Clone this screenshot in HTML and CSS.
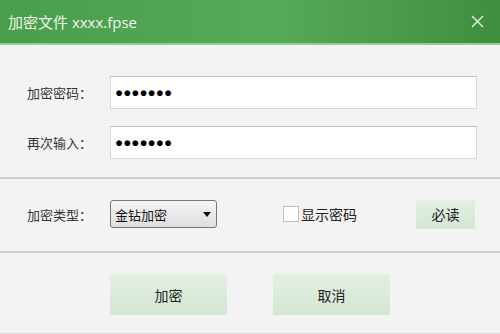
FILE: index.html
```html
<!DOCTYPE html>
<html lang="zh">
<head>
  <meta charset="UTF-8" />
  <title>加密文件</title>
  <link rel="stylesheet" href="styles.css">
</head>
<body>
  <div class="dialog">
    <div class="title_bar">
      <span class="title">加密文件 xxxx.fpse</span>
      <svg class="close" width="13" height="13" viewBox="0 0 13 13">
        <path d="M1 1 L12 12 M12 1 L1 12" stroke="#e8f3e8" stroke-width="1.4" fill="none"/>
      </svg>
    </div>
    <div class="section pw_section">
      <div class="row">
        <label class="label">加密密码：</label>
        <div class="input">●●●●●●●</div>
      </div>
      <div class="row">
        <label class="label">再次输入：</label>
        <div class="input">●●●●●●●</div>
      </div>
    </div>
    <div class="section type_section">
      <label class="label">加密类型：</label>
      <div class="select">
        <span>金钻加密</span>
        <svg width="8" height="5" viewBox="0 0 8 5"><path d="M0 0 H8 L4 5 Z" fill="#111"/></svg>
      </div>
      <div class="check">
        <span class="box"></span>
        <span>显示密码</span>
      </div>
      <button class="btn small">必读</button>
    </div>
    <div class="section actions">
      <button class="btn big">加密</button>
      <button class="btn big">取消</button>
    </div>
  </div>
</body>
</html>
```

FILE: styles.css
```css
body {
  margin: 0;
  width: 500px;
  height: 334px;
  overflow: hidden;
  font-family: "Noto Sans CJK SC", "Liberation Sans", sans-serif;
  color: #222;
}

.dialog {
  background-color: #f3f3f3;
  height: 334px;
  border-bottom: 1px solid #dcdcdc;
  box-sizing: border-box;
}

.title_bar {
  height: 43px;
  background: linear-gradient(to right, #4a9d4a, #56a956 55%, #3f8e3f);
  border-bottom: 2px solid #8fd08f;
  display: flex;
  align-items: center;
  justify-content: space-between;
  padding: 0 16px 0 8px;
}

.title {
  color: #eef6ee;
  font-size: 15px;
  font-family: "Open Sans", "Noto Sans CJK SC", sans-serif;
}

.section {
  border-bottom: 2px solid #cfcfcf;
}

.pw_section {
  height: 134px;
  padding-top: 31px;
  box-sizing: border-box;
}

.row {
  display: flex;
  align-items: center;
  margin-bottom: 17px;
}

.label {
  width: 83px;
  padding-left: 27px;
  font-size: 13px;
  color: #333;
}

.input {
  width: 367px;
  height: 33px;
  box-sizing: border-box;
  background: #fff;
  border: 1px solid #d4d8dc;
  border-top-color: #b8c0c8;
  font-family: "Liberation Sans", sans-serif;
  font-size: 13.5px;
  padding-left: 4px;
  display: flex;
  align-items: center;
  color: #000;
}

.type_section {
  height: 74px;
  display: flex;
  align-items: center;
  box-sizing: border-box;
  padding-bottom: 2px;
}

.select {
  width: 107px;
  height: 28px;
  box-sizing: border-box;
  border: 1px solid #777;
  border-radius: 3px;
  background: linear-gradient(#f6f6f6, #dedede);
  display: flex;
  align-items: center;
  justify-content: space-between;
  padding: 0 5px 0 4px;
  font-size: 13px;
  color: #111;
}

.check {
  display: flex;
  align-items: center;
  margin-left: 66px;
  font-size: 14px;
  color: #222;
}

.box {
  width: 14px;
  height: 14px;
  background: #fff;
  border: 1px solid #bdbdbd;
  margin-right: 2px;
}

.btn {
  border: none;
  background: linear-gradient(#e4efe2, #d3e6d3);
  font-family: "Noto Sans CJK SC", sans-serif;
  color: #222;
  padding: 0;
}

.small {
  width: 59px;
  height: 29px;
  font-size: 14px;
  margin-left: 59px;
}

.actions {
  display: flex;
  justify-content: center;
  gap: 46px;
  padding-top: 21px;
  border-bottom: none;
}

.big {
  width: 117px;
  height: 41px;
  font-size: 14px;
}
```
